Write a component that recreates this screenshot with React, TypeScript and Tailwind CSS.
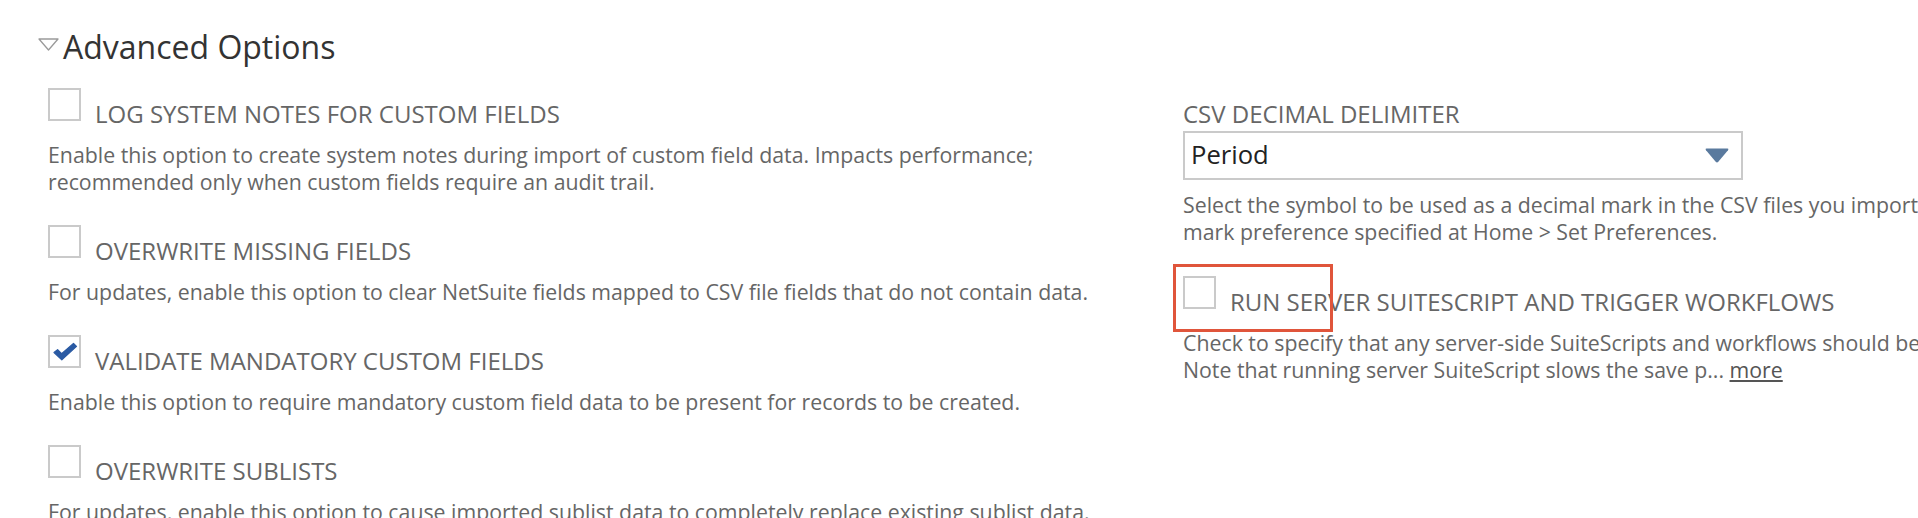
import React from "react";

function Box({ checked }: { checked?: boolean }) {
  return (
    <div className="w-[33px] h-[33px] shrink-0 border-2 border-[#cacaca] bg-white relative">
      {checked && (
        <svg className="absolute left-[3px] top-[5px]" width="25" height="20" viewBox="0 0 25 20">
          <path d="M1 10.5 L4.6 7.6 L8.6 11.6 L20.5 1.5 L23.5 4.4 L8.8 17.8 Z" fill="#2a5aa3" stroke="#2a5aa3" strokeWidth="1.2" strokeLinejoin="round" />
        </svg>
      )}
    </div>
  );
}

function CheckRow({ label, checked, highlight }: { label: string; checked?: boolean; highlight?: boolean }) {
  return (
    <div className="relative flex items-start h-[42px]">
      <Box checked={checked} />
      <div className="ml-[14px] mt-[9px] text-[24px] leading-[33px] text-[#666666] whitespace-nowrap">{label}</div>
      {highlight && (
        <div className="absolute left-[-10px] top-[-12px] w-[160px] h-[68px] border-[3.5px] border-[#e0553b]" />
      )}
    </div>
  );
}

function Desc({ children }: { children: React.ReactNode }) {
  return <div className="mt-[11px] text-[21.3px] leading-[27px] text-[#666666]">{children}</div>;
}

function Field({ label, checked, desc }: { label: string; checked?: boolean; desc: string }) {
  return (
    <div className="mb-[30px]">
      <CheckRow label={label} checked={checked} />
      <Desc>{desc}</Desc>
    </div>
  );
}

export default function App() {
  return (
    <div
      className="w-[1918px] h-[518px] overflow-hidden bg-white pt-[27px]"
      style={{ fontFamily: '"Open Sans", "Noto Sans", sans-serif' }}
    >
      <div className="flex items-start pl-[38px]">
        <svg className="mt-[11px] shrink-0" width="21" height="13" viewBox="0 0 21 13">
          <path d="M1 1 H20 L10.5 12 Z" fill="none" stroke="#9a9a9a" strokeWidth="1.3" strokeLinejoin="round" />
        </svg>
        <div className="ml-[4px] text-[32px] leading-[40px] text-[#333333] whitespace-nowrap">Advanced Options</div>
      </div>

      <div className="flex mt-[21px] pl-[48px]">
        <div className="w-[1100px] shrink-0">
          <Field
            label="LOG SYSTEM NOTES FOR CUSTOM FIELDS"
            desc="Enable this option to create system notes during import of custom field data. Impacts performance; recommended only when custom fields require an audit trail."
          />
          <Field
            label="OVERWRITE MISSING FIELDS"
            desc="For updates, enable this option to clear NetSuite fields mapped to CSV file fields that do not contain data."
          />
          <Field
            label="VALIDATE MANDATORY CUSTOM FIELDS"
            checked
            desc="Enable this option to require mandatory custom field data to be present for records to be created."
          />
          <Field
            label="OVERWRITE SUBLISTS"
            desc="For updates, enable this option to cause imported sublist data to completely replace existing sublist data."
          />
        </div>

        <div className="ml-[35px] w-[1000px] shrink-0">
          <div className="mt-[9px] text-[24px] leading-[33px] text-[#666666] whitespace-nowrap">CSV DECIMAL DELIMITER</div>
          <div className="mt-[1px] w-[560px] h-[49px] border-2 border-[#cacaca] bg-white flex items-center justify-between pl-[6px] pr-[12px]">
            <span className="text-[25.6px] text-[#222222]">Period</span>
            <svg width="24" height="15" viewBox="0 0 24 15">
              <path d="M1.5 0.5 H22.5 Q24 0.5 23 2.2 L13.3 13.8 Q12 15.2 10.7 13.8 L1 2.2 Q0 0.5 1.5 0.5 Z" fill="#5a7a9e" />
            </svg>
          </div>
          <div className="mt-[11px] text-[21.3px] leading-[27px] text-[#666666] whitespace-nowrap">
            Select the symbol to be used as a decimal mark in the CSV files you import. This setting overrides the decimal
            <br />
            mark preference specified at Home &gt; Set Preferences.
          </div>
          <div className="mt-[31px]">
            <CheckRow label="RUN SERVER SUITESCRIPT AND TRIGGER WORKFLOWS" highlight />
            <div className="mt-[11px] text-[21.3px] leading-[27px] text-[#666666] whitespace-nowrap">
              Check to specify that any server-side SuiteScripts and workflows should be triggered for records imported.
              <br />
              Note that running server SuiteScript slows the save p...{" "}
              <span className="underline text-[#555555]">more</span>
            </div>
          </div>
        </div>
      </div>
    </div>
  );
}
